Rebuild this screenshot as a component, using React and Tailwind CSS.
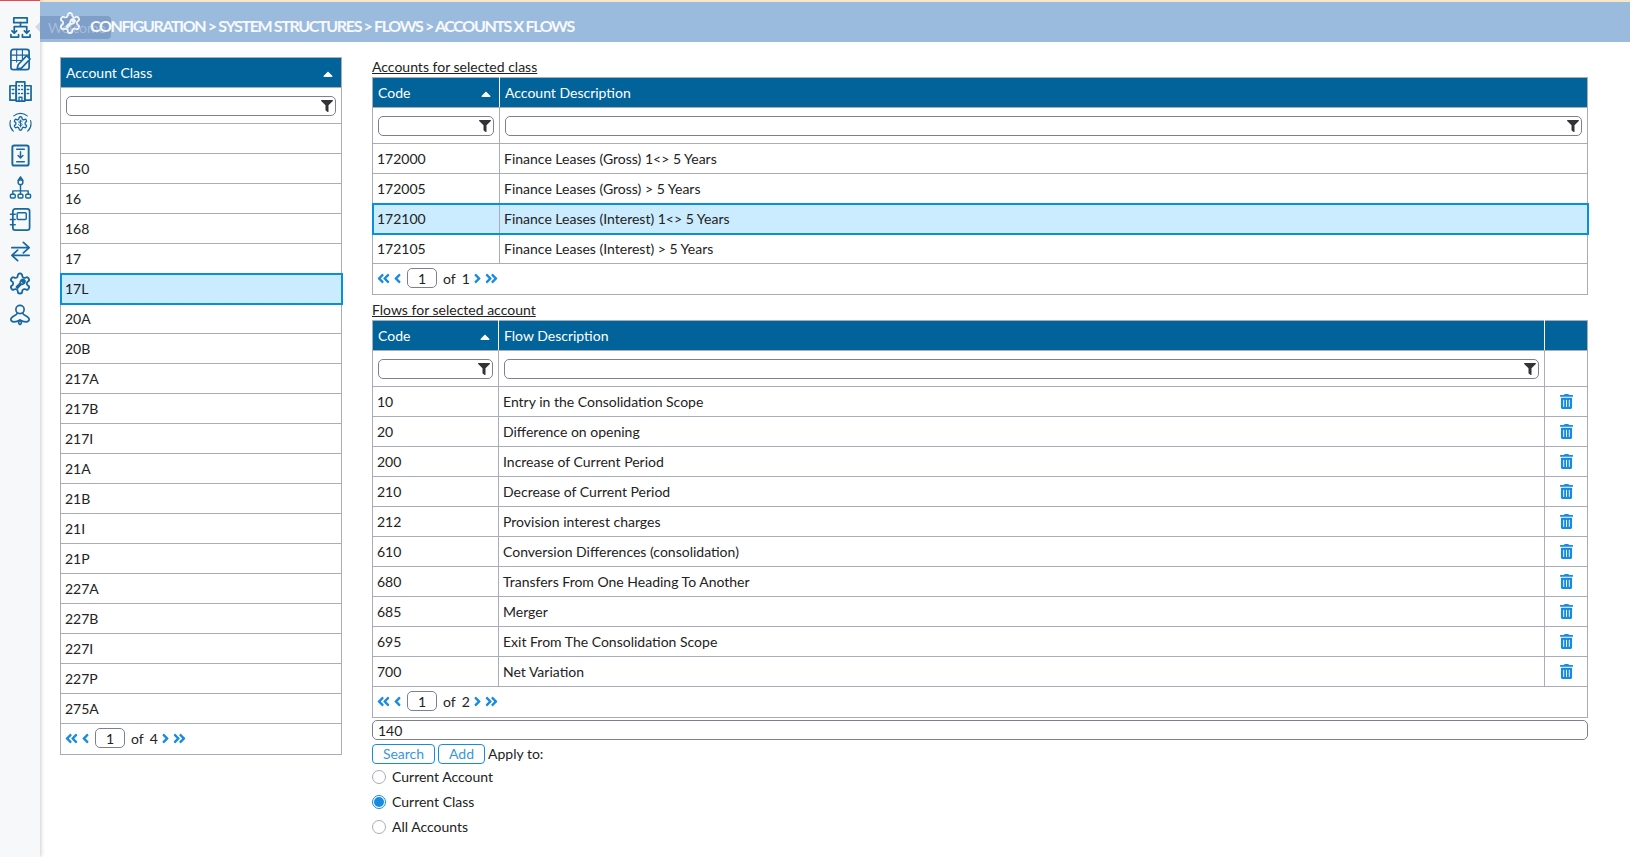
import { FaAngleDoubleLeft, FaAngleDoubleRight, FaAngleLeft, FaAngleRight, FaFilter, FaSortUp, FaTrashAlt } from "react-icons/fa";

const classes = ["150", "16", "168", "17", "17L", "20A", "20B", "217A", "217B", "217I", "21A", "21B", "21I", "21P", "227A", "227B", "227I", "227P", "275A"];

const accounts = [
  ["172000", "Finance Leases (Gross) 1<> 5 Years"],
  ["172005", "Finance Leases (Gross) > 5 Years"],
  ["172100", "Finance Leases (Interest) 1<> 5 Years"],
  ["172105", "Finance Leases (Interest) > 5 Years"],
];

const flows = [
  ["10", "Entry in the Consolidation Scope"],
  ["20", "Difference on opening"],
  ["200", "Increase of Current Period"],
  ["210", "Decrease of Current Period"],
  ["212", "Provision interest charges"],
  ["610", "Conversion Differences (consolidation)"],
  ["680", "Transfers From One Heading To Another"],
  ["685", "Merger"],
  ["695", "Exit From The Consolidation Scope"],
  ["700", "Net Variation"],
];

const cogPath =
  "M12.22 2h-.44a2 2 0 0 0-2 2v.18a2 2 0 0 1-1 1.73l-.43.25a2 2 0 0 1-2 0l-.15-.08a2 2 0 0 0-2.73.73l-.22.38a2 2 0 0 0 .73 2.73l.15.1a2 2 0 0 1 1 1.72v.51a2 2 0 0 1-1 1.74l-.15.09a2 2 0 0 0-.73 2.73l.22.38a2 2 0 0 0 2.73.73l.15-.08a2 2 0 0 1 2 0l.43.25a2 2 0 0 1 1 1.73V20a2 2 0 0 0 2 2h.44a2 2 0 0 0 2-2v-.18a2 2 0 0 1 1-1.73l.43-.25a2 2 0 0 1 2 0l.15.08a2 2 0 0 0 2.73-.73l.22-.39a2 2 0 0 0-.73-2.73l-.15-.08a2 2 0 0 1-1-1.74v-.5a2 2 0 0 1 1-1.74l.15-.09a2 2 0 0 0 .73-2.73l-.22-.38a2 2 0 0 0-2.73-.73l-.15.08a2 2 0 0 1-2 0l-.43-.25a2 2 0 0 1-1-1.73V4a2 2 0 0 0-2-2z";

function Icon({ children, className = "w-[23px] h-[23px] text-[#17689f]" }) {
  return (
    <svg viewBox="0 0 24 24" fill="none" stroke="currentColor" strokeWidth="1.8" strokeLinecap="round" strokeLinejoin="round" className={className}>
      {children}
    </svg>
  );
}

function CogWrench({ className }) {
  return (
    <Icon className={className}>
      <path d={cogPath} />
      <path d="M8.500 15.500l3.800-3.800a3 3 0 0 1 3.600-3.600l-1.700 1.700 1 1 1.700-1.700a3 3 0 0 1-3.600 3.600l-3.800 3.800" />
    </Icon>
  );
}

const sideIcons = [
  <Icon key="a">
    <rect x="5" y="2" width="14" height="5" />
    <path d="M12 7v4M5.500 11h13M5.500 11v7M18.500 11v7M3 15.500L5.500 18 8 15.500M16 15.500l2.500 2.500 2.500-2.500M2 19.500V22h8v-2.500M14 19.500V22h8v-2.500" />
  </Icon>,
  <Icon key="b">
    <rect x="2" y="1.500" width="19" height="21" rx="2.500" />
    <path d="M2 7.500h19M2 13h12M8 1.500v13M14 1.500v11" strokeWidth="1.200" />
    <path d="M8.500 22l1-4.500L18.500 8l3.500 3.500-9 9.500z" fill="#f7f8fa" />
  </Icon>,
  <Icon key="c">
    <rect x="7.500" y="2" width="9" height="20" />
    <rect x="1" y="6" width="6.500" height="15" />
    <rect x="16.500" y="6" width="6.500" height="15" />
    <path d="M10.500 22v-4h3v4" strokeWidth="1.400" />
    <path d="M10 6h.8M13.200 6h.8M10 10h.8M13.200 10h.8M10 14h.8M13.200 14h.8M3.500 10h1.500M3.500 14h1.500M19 10h1.500M19 14h1.500" strokeWidth="1.600" />
  </Icon>,
  <Icon key="d">
    <path d="M5 4a11 11 0 0 1 14 0M22.500 9a11 11 0 0 1-3 11M4.500 20a11 11 0 0 1-3-11" strokeWidth="1.200" />
    <g transform="translate(3.600 3.600) scale(0.7)">
      <path d={cogPath} strokeWidth="2" />
    </g>
    <path d="M14 10c-.5-1-3.500-1.300-3.800.3-.3 1.700 3.800 1.200 3.600 3-.2 1.400-3.300 1.200-3.900 0M12 8.500v7" strokeWidth="1" />
  </Icon>,
  <Icon key="e">
    <rect x="3.500" y="1.500" width="17" height="21" rx="2" strokeWidth="2" />
    <path d="M8 5.500h8M8 18.500h8M12 8v6.500M9.500 12l2.500 2.500 2.500-2.500" strokeWidth="1.500" />
  </Icon>,
  <Icon key="f">
    <path d="M12 1l-2.500 3.500M12 1l2.500 3.500M12 9v4M4 19v-3.500h16V19M12 13v6" strokeWidth="1.500" />
    <circle cx="12" cy="6.500" r="2.500" strokeWidth="1.500" />
    <rect x="1.500" y="19" width="5" height="4" rx="1" strokeWidth="1.500" />
    <rect x="9.500" y="19" width="5" height="4" rx="1" strokeWidth="1.500" />
    <rect x="17.500" y="19" width="5" height="4" rx="1" strokeWidth="1.500" />
  </Icon>,
  <Icon key="g">
    <rect x="4" y="1" width="17.500" height="22" rx="2.500" />
    <rect x="8.500" y="5" width="9.500" height="7" rx="1" strokeWidth="1.500" />
    <path d="M1.500 6.500h5M1.500 12h5M1.500 17.500h5" strokeWidth="1.500" />
  </Icon>,
  <Icon key="h">
    <path d="M3 8h18M15 2.500L21 8l-6 5.500M21 16H3M9 10.500L3 16l6 5.500" />
  </Icon>,
  <CogWrench key="i" className="h-[25px] w-[25px] text-[#17689f]" />,
  <Icon key="j" className="h-[22px] w-[22px] text-[#17689f]">
    <circle cx="12" cy="6" r="4.500" />
    <path d="M9 10c-.5 3-7 3-7 7 0 3.500 6 3 10 .5 4 2.500 10 3 10-.5 0-4-6.500-4-7-7" />
    <path d="M12 17.500c-2 2-2 4 0 5 2-1 2-3 0-5z" />
  </Icon>,
];

function FilterInput() {
  return (
    <div className="flex h-[20px] items-center justify-end rounded-[5px] border border-[#7b8190] bg-white pr-[2px]">
      <FaFilter className="h-[12px] w-[12px] text-[#333333]" />
    </div>
  );
}

function Cell({ pad = "px-[4px]", children }) {
  return <td className={`border border-[#a9adba] py-0 ${pad}`}>{children}</td>;
}

function HeadCell({ children, sort }) {
  return (
    <th className="border border-[#a9adba] border-r-white bg-[#01639a] px-[5px] py-0 text-left font-normal text-white last:border-r-[#a9adba]">
      <div className="flex items-center justify-between">
        <span>{children}</span>
        {sort && <FaSortUp className="mr-[3px] mt-[10px] h-[16px] w-[10px]" />}
      </div>
    </th>
  );
}

function Paginator({ total }) {
  return (
    <div className="flex h-[31px] items-center border border-t-0 border-[#a9adba] pb-[2px] pl-[4px]">
      <FaAngleDoubleLeft className="h-[15px] w-[13px] text-[#168be0]" />
      <FaAngleLeft className="ml-[3px] h-[15px] w-[9px] text-[#168be0]" />
      <div className="ml-[5px] flex h-[20px] w-[30px] items-center justify-center rounded-[5px] border border-[#7b8190]">1</div>
      <span className="ml-[6px]">of</span>
      <span className="ml-[6px]">{total}</span>
      <FaAngleRight className="ml-[3px] h-[15px] w-[9px] text-[#168be0]" />
      <FaAngleDoubleRight className="ml-[3px] h-[15px] w-[13px] text-[#168be0]" />
    </div>
  );
}

function Radio({ label, checked }) {
  return (
    <label className="flex h-[25px] items-center gap-[6px]">
      <span className={`flex h-[14px] w-[14px] items-center justify-center rounded-full border ${checked ? "border-[#168be0]" : "border-[#a9adba]"}`}>
        {checked && <span className="h-[10px] w-[10px] rounded-full bg-[#168be0]" />}
      </span>
      {label}
    </label>
  );
}

function Button({ children, className = "" }) {
  return (
    <button className={`h-[20px] rounded-[4px] border border-[#168be0] bg-white leading-none text-[#3a96dc] ${className}`}>{children}</button>
  );
}

export default function App() {
  return (
    <div className="flex h-[857px] w-[1630px] overflow-hidden bg-white font-['Lato',sans-serif] text-[14px] text-[#222222]">
      {/* Barra lateral */}
      <aside className="z-10 flex w-[40px] shrink-0 flex-col items-center bg-[#f7f8fa] shadow-[1px_0_4px_rgba(0,0,0,0.2)]">
        <div className="h-[1px] w-full bg-[#e8474c]" />
        <div className="mt-[14px] flex flex-col items-center gap-[8px]">
          {sideIcons.map((icon, i) => (
            <div key={i} className="flex h-[24px] w-[24px] items-center justify-center">{icon}</div>
          ))}
        </div>
      </aside>

      <main className="flex min-w-0 flex-1 flex-col">
        <div className="h-[2px] shrink-0 bg-[#f7e6c8]" />
        {/* Cabecalho */}
        <header className="relative z-20 flex h-[40px] shrink-0 items-center bg-[#9abbde] pl-[50px] pt-[8px]">
          <div className="absolute left-0 top-[14px] flex h-[23px] w-[71px] items-center rounded-r-[4px] bg-[#7f9fc8] pl-[8px] text-[#a5bddd]">
            Welcome
          </div>
          <div className="absolute left-[-5px] top-[20px] h-0 w-0 border-y-[5px] border-r-[5px] border-y-transparent border-r-[#d3d9e2]" />
          <div className="absolute left-[18px] top-[9px]">
            <CogWrench className="h-[24px] w-[24px] text-[#f1f5fa]" />
          </div>
          <h1 className="relative text-[16px] font-bold tracking-[-1.35px] text-[#f7f9fc]">
            CONFIGURATION &gt; SYSTEM STRUCTURES &gt; FLOWS &gt; ACCOUNTS X FLOWS
          </h1>
        </header>

        <div className="flex items-start pl-[20px] pt-[15px]">
          {/* Classes */}
          <div className="w-[282px] shrink-0">
            <table className="w-full table-fixed border-collapse">
              <thead>
                <tr className="h-[30px]">
                  <HeadCell sort>Account Class</HeadCell>
                </tr>
                <tr className="h-[36px]">
                  <Cell pad="px-[5px]">
                    <FilterInput />
                  </Cell>
                </tr>
              </thead>
              <tbody>
                <tr className="h-[30px]">
                  <Cell />
                </tr>
                {classes.map((c) => (
                  <tr key={c} className={`h-[30px] ${c === "17L" ? "bg-[#cbebff] outline-2 -outline-offset-1 outline-[#0a8fdf]" : ""}`}>
                    <Cell>{c}</Cell>
                  </tr>
                ))}
              </tbody>
            </table>
            <Paginator total="4" />
          </div>

          <div className="ml-[30px] w-[1216px] shrink-0">
            {/* Contas */}
            <div className="h-[20px] leading-[20px] underline">Accounts for selected class</div>
            <table className="w-full table-fixed border-collapse">
              <colgroup>
                <col className="w-[127px]" />
                <col />
              </colgroup>
              <thead>
                <tr className="h-[30px]">
                  <HeadCell sort>Code</HeadCell>
                  <HeadCell>Account Description</HeadCell>
                </tr>
                <tr className="h-[36px]">
                  <Cell pad="px-[5px]">
                    <FilterInput />
                  </Cell>
                  <Cell pad="px-[5px]">
                    <FilterInput />
                  </Cell>
                </tr>
              </thead>
              <tbody>
                {accounts.map(([code, desc]) => (
                  <tr key={code} className={`h-[30px] ${code === "172100" ? "bg-[#cbebff] outline-2 -outline-offset-1 outline-[#0a8fdf]" : ""}`}>
                    <Cell>{code}</Cell>
                    <Cell>{desc}</Cell>
                  </tr>
                ))}
              </tbody>
            </table>
            <Paginator total="1" />

            {/* Fluxos */}
            <div className="mt-[5px] h-[20px] leading-[20px] underline">Flows for selected account</div>
            <table className="w-full table-fixed border-collapse">
              <colgroup>
                <col className="w-[126px]" />
                <col />
                <col className="w-[43px]" />
              </colgroup>
              <thead>
                <tr className="h-[30px]">
                  <HeadCell sort>Code</HeadCell>
                  <HeadCell>Flow Description</HeadCell>
                  <HeadCell />
                </tr>
                <tr className="h-[36px]">
                  <Cell pad="px-[5px]">
                    <FilterInput />
                  </Cell>
                  <Cell pad="px-[5px]">
                    <FilterInput />
                  </Cell>
                  <Cell />
                </tr>
              </thead>
              <tbody>
                {flows.map(([code, desc]) => (
                  <tr key={code} className="h-[30px]">
                    <Cell>{code}</Cell>
                    <Cell>{desc}</Cell>
                    <Cell>
                      <FaTrashAlt className="mx-auto h-[15px] w-[13px] text-[#168be0]" />
                    </Cell>
                  </tr>
                ))}
              </tbody>
            </table>
            <Paginator total="2" />

            <div className="mt-[2px] flex h-[20px] items-center rounded-[5px] border border-[#7b8190] px-[5px]">140</div>
            <div className="mt-[3px] flex items-center">
              <Button className="w-[63px]">Search</Button>
              <Button className="ml-[3px] w-[47px]">Add</Button>
              <span className="ml-[3px]">Apply to:</span>
            </div>
            <div className="flex flex-col">
              <Radio label="Current Account" />
              <Radio label="Current Class" checked />
              <Radio label="All Accounts" />
            </div>
          </div>
        </div>
      </main>
    </div>
  );
}
